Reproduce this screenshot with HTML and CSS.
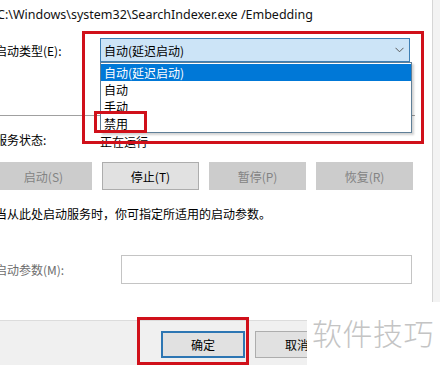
FILE: index.html
```html
<!DOCTYPE html>
<html lang="zh-CN">
<head>
<meta charset="utf-8">
<link rel="stylesheet" href="styles.css">
</head>
<body>
<div class="window">
  <div class="top">
    <div class="content">
      <div class="path">C:\Windows\system32\SearchIndexer.exe /Embedding</div>
      <div class="row type-row">
        <div class="label">启动类型(E):</div>
        <div class="combo">
          <span>自动(延迟启动)</span>
          <svg class="chev" width="9" height="6" viewBox="0 0 9 6"><path d="M0.5 0.8 L4.5 4.8 L8.5 0.8" fill="none" stroke="#5a5a5a" stroke-width="1"/></svg>
        </div>
      </div>
      <div class="sep"></div>
      <div class="row status-row">
        <div class="label">服务状态:</div>
        <div class="value">正在运行</div>
      </div>
      <div class="buttons">
        <div class="btn disabled">启动(S)</div>
        <div class="btn">停止(T)</div>
        <div class="btn disabled">暂停(P)</div>
        <div class="btn disabled">恢复(R)</div>
      </div>
      <div class="desc">当从此处启动服务时，你可指定所适用的启动参数。</div>
      <div class="row param-row">
        <div class="label param-label">启动参数(M):</div>
        <div class="input"></div>
      </div>
    </div>
    <div class="edge"></div>
  </div>
  <div class="footer">
    <div class="fbtn ok">确定</div>
    <div class="fbtn">取消</div>
    <div class="fbtn">应用(A)</div>
  </div>

  <div class="dropdown">
    <div class="item selected">自动(延迟启动)</div>
    <div class="item">自动</div>
    <div class="item">手动</div>
    <div class="item">禁用</div>
  </div>
  <div class="mark mark-big"></div>
  <div class="mark mark-small"></div>
  <div class="mark mark-ok"></div>
  <div class="watermark">软件技巧</div>
</div>
</body>
</html>
```

FILE: styles.css
```css
html, body {
  margin: 0;
  padding: 0;
  background: #ffffff;
}
body {
  width: 440px;
  height: 365px;
  overflow: hidden;
  font-family: "Noto Sans CJK SC", "Noto Sans", sans-serif;
  font-size: 12px;
  color: #000;
}
.window {
  position: relative;
  width: 440px;
  height: 365px;
  overflow: hidden;
}
.top {
  display: flex;
  height: 320px;
}
.content {
  flex: 1;
  margin-left: -5px;
  display: flex;
  flex-direction: column;
}
.edge {
  width: 7px;
  background: #f3f3f3;
  border-left: 1px solid #d6d6d6;
}
.path {
  height: 30px;
  line-height: 30px;
  font-family: "Noto Sans", "Noto Sans CJK SC", sans-serif;
  font-size: 12.5px;
  padding-left: 2px;
  color: #111;
}
.row {
  display: flex;
  align-items: center;
}
.label {
  width: 105px;
  flex: none;
}
.type-row {
  margin-top: 8px;
  height: 24px;
}
.combo {
  width: 310px;
  border: 1px solid #3d7fb5;
  background: #cce4f7;
  display: flex;
  align-items: center;
  justify-content: space-between;
  padding: 0 5px 0 3px;
  box-sizing: border-box;
  height: 24px;
}
.chev {
  display: block;
}
.sep {
  margin-top: 53px;
  height: 1px;
  background: #a0a0a0;
  width: 420px;
}
.status-row {
  margin-top: 14px;
  height: 18px;
}
.value {
  color: #000;
  margin-top: 4px;
}
.buttons {
  margin-top: 14px;
  height: 28px;
  display: grid;
  grid-template-columns: repeat(4, 97px);
  column-gap: 10px;
}
.btn {
  box-sizing: border-box;
  border: 1px solid #adadad;
  background: #e1e1e1;
  display: flex;
  align-items: center;
  justify-content: center;
}
.btn.disabled {
  background: #cccccc;
  border-color: #cccccc;
  color: #838383;
}
.desc {
  margin-top: 16px;
  height: 16px;
  line-height: 16px;
}
.param-row {
  margin-top: 33px;
  height: 29px;
}
.param-label {
  width: 126px;
  color: #6d6d6d;
}
.input {
  width: 291px;
  height: 29px;
  box-sizing: border-box;
  border: 1px solid #c4c4c4;
  background: #fff;
}
.footer {
  height: 44px;
  border-top: 1px solid #dcdcdc;
  background: #f0f0f0;
  display: flex;
  align-items: flex-start;
  padding-left: 161px;
  gap: 10px;
}
.fbtn {
  margin-top: 10px;
  width: 84px;
  height: 27px;
  box-sizing: border-box;
  border: 1px solid #adadad;
  background: #e1e1e1;
  display: flex;
  align-items: center;
  justify-content: center;
  flex: none;
}
.fbtn.ok {
  border: 2px solid #2d76b3;
}
.dropdown {
  position: absolute;
  left: 100px;
  top: 62px;
  width: 312px;
  height: 71px;
  box-sizing: border-box;
  border: 1px solid #5f7f98;
  background: #fff;
  box-shadow: 2px 2px 2px rgba(0,0,0,0.18);
  padding-top: 1px;
}
.item {
  height: 17px;
  line-height: 17px;
  padding-left: 3px;
}
.item.selected {
  background: #0078d7;
  color: #fff;
}
.mark {
  position: absolute;
  border: 3px solid #d0101a;
  box-sizing: border-box;
}
.mark-big {
  left: 82px;
  top: 31px;
  width: 342px;
  height: 113px;
}
.mark-small {
  left: 94px;
  top: 111px;
  width: 53px;
  height: 22px;
}
.mark-ok {
  left: 137px;
  top: 317px;
  width: 112px;
  height: 48px;
}
.watermark {
  position: absolute;
  left: 307px;
  top: 302px;
  width: 133px;
  height: 63px;
  background: #fff;
  color: #c4c4c4;
  font-size: 30px;
  line-height: 30px;
  padding-top: 15px;
  padding-left: 5px;
  box-sizing: border-box;
  letter-spacing: 0.5px;
  font-weight: 300;
}
```
